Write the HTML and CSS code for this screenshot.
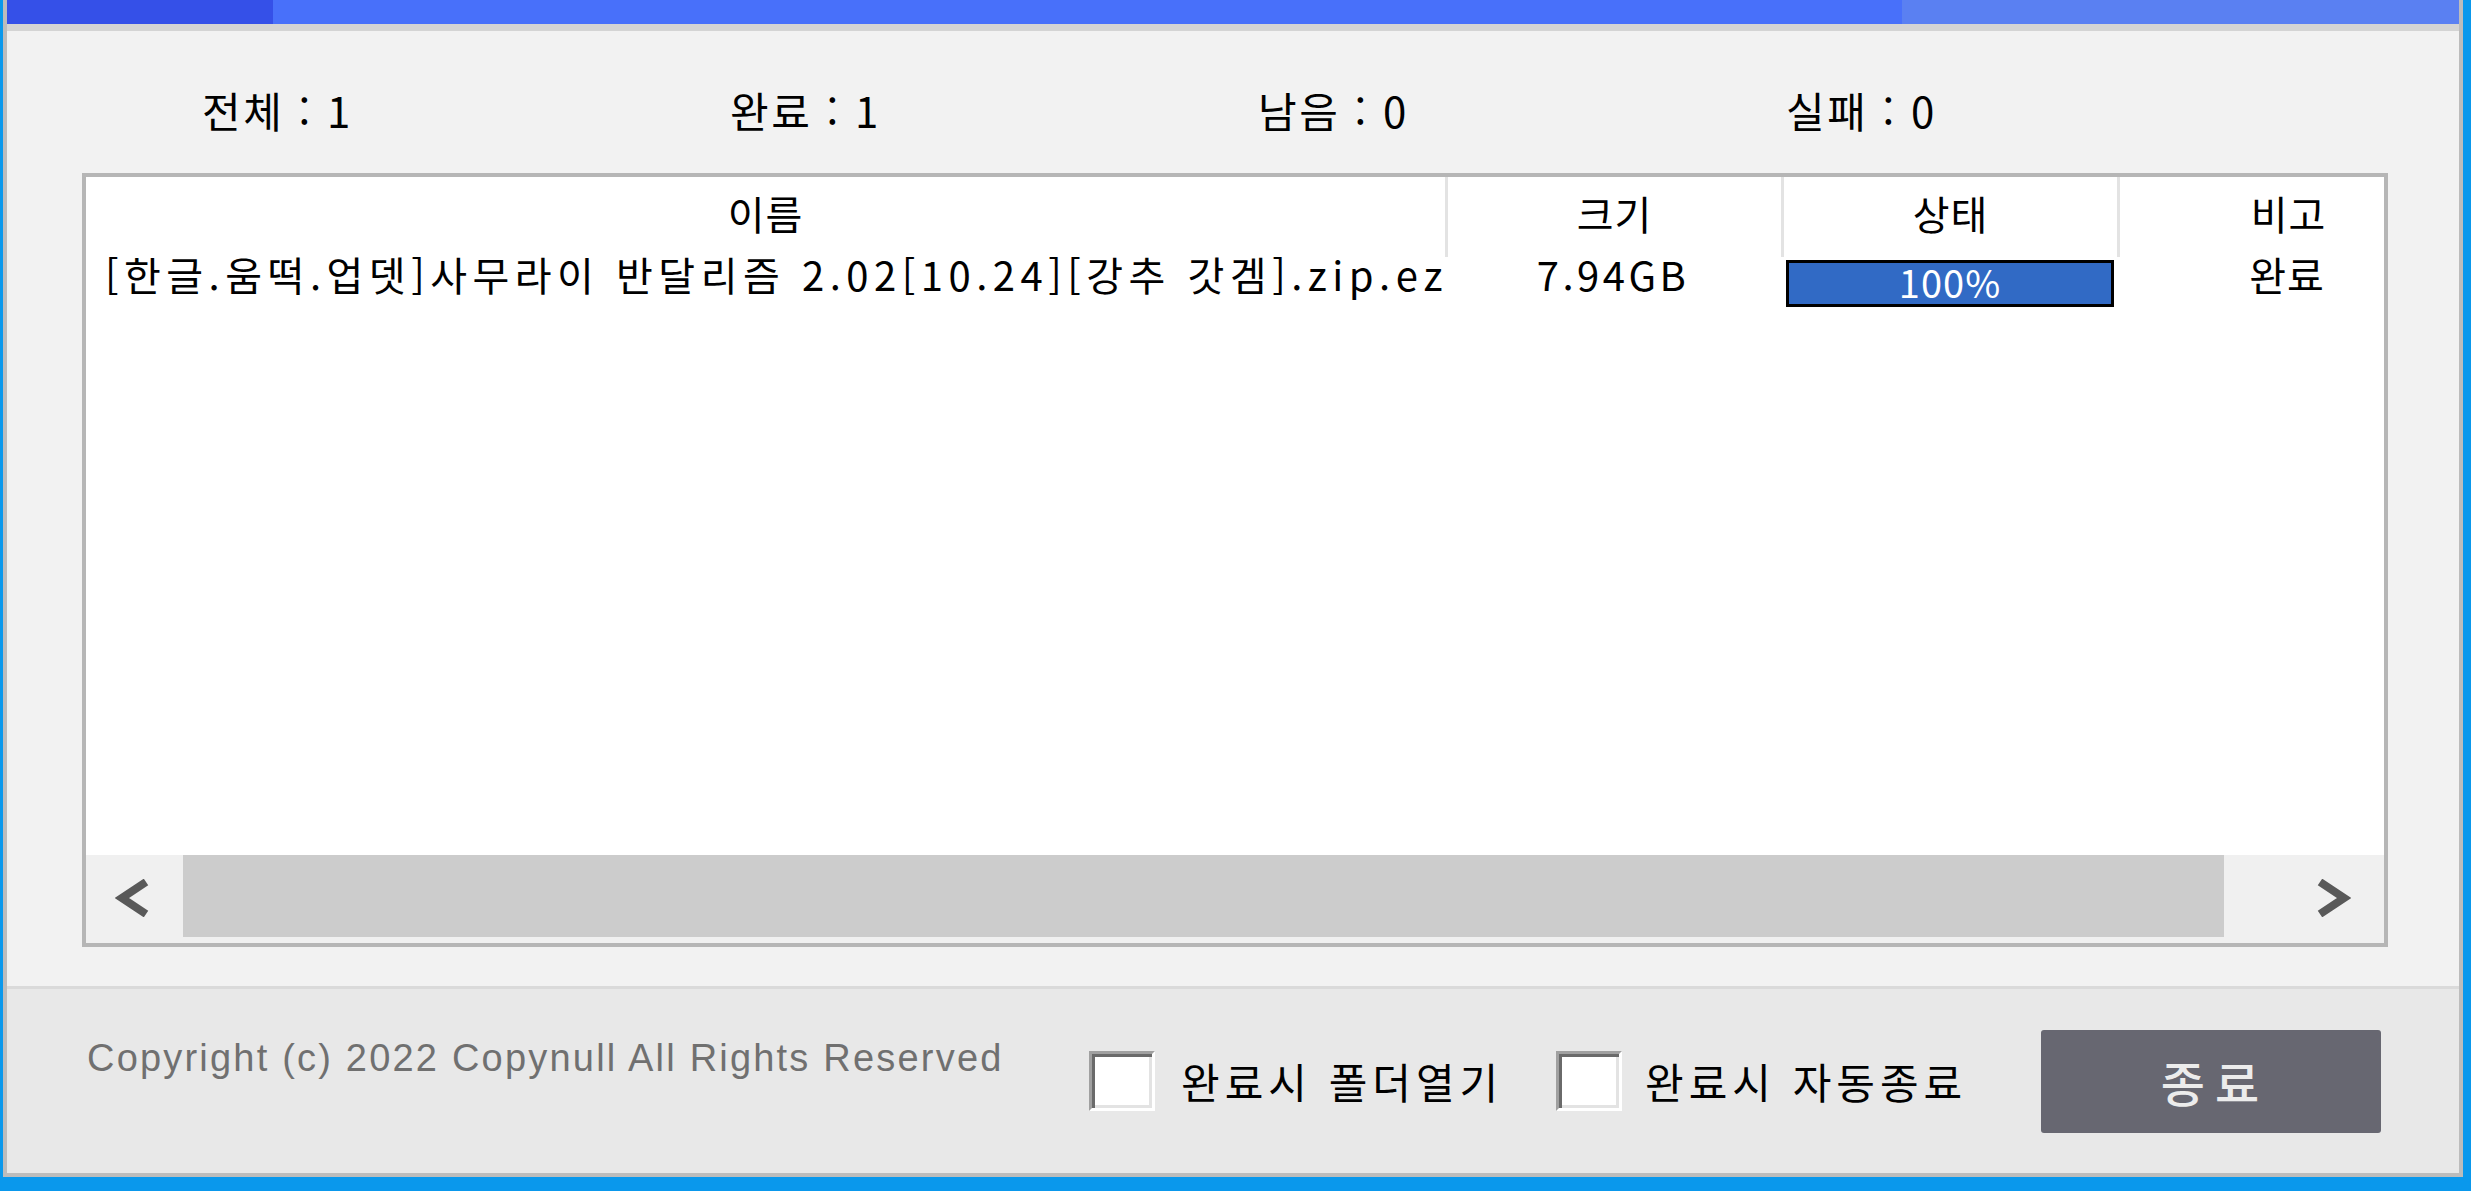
FILE: index.html
```html
<!DOCTYPE html>
<html lang="ko">
<head>
<meta charset="UTF-8">
<title>다운로드</title>
<link rel="stylesheet" href="styles.css">
</head>
<body>

<div class="window">
  <div class="titlebar">
    <div class="seg seg-dark"></div>
    <div class="seg seg-mid"></div>
    <div class="seg seg-light"></div>
  </div>
  <div class="title-shadow"></div>

  <div class="stats">
    <div class="stat">전체 : 1</div>
    <div class="stat">완료 : 1</div>
    <div class="stat">남음 : 0</div>
    <div class="stat">실패 : 0</div>
  </div>

  <div class="list">
    <div class="list-head">
      <div class="col">이름</div>
      <div class="col col-sep">크기</div>
      <div class="col col-sep">상태</div>
      <div class="col col-sep">비고</div>
    </div>
    <div class="list-row">
      <div class="cell cell-name">[한글.움떡.업뎃]사무라이 반달리즘 2.02[10.24][강추 갓겜].zip.ez</div>
      <div class="cell cell-size">7.94GB</div>
      <div class="cell cell-state">
        <div class="progress">100%</div>
      </div>
      <div class="cell">완료</div>
    </div>
    <div class="list-fill"></div>
    <!-- horizontal scrollbar -->
    <div class="hscroll">
      <div class="arrow arrow-left">
        <svg width="34" height="38" viewBox="0 0 34 38"><polyline points="31,3 7,19 31,35" fill="none" stroke="#595959" stroke-width="8"/></svg>
      </div>
      <div class="thumb"></div>
      <div class="arrow arrow-right">
        <svg width="34" height="38" viewBox="0 0 34 38"><polyline points="3,3 27,19 3,35" fill="none" stroke="#595959" stroke-width="8"/></svg>
      </div>
    </div>
  </div>

  <div class="footer">
    <div class="copyright">Copyright (c) 2022 Copynull All Rights Reserved</div>
    <label class="option option-first"><span class="checkbox"></span><span class="option-text">완료시 폴더열기</span></label>
    <label class="option"><span class="checkbox"></span><span class="option-text option-text-b">완료시 자동종료</span></label>
    <button class="close-btn">종료</button>
  </div>
</div>

</body>
</html>
```

FILE: styles.css
```css
body {
  margin: 0;
  height: 1191px;
  overflow: hidden;
  background-color: #0a98ec;
  font-family: "Noto Sans CJK KR", "Noto Sans", sans-serif;
  color: #000;
}
.window {
  margin-left: 3px;
  width: 2460px;
  height: 1177px;
  box-sizing: border-box;
  border: 4px solid #bcbcbc;
  border-top: 0;
  background-color: #f2f2f2;
  display: flex;
  flex-direction: column;
}
/* title bar */
.titlebar {
  height: 24px;
  display: flex;
}
.seg-dark {
  width: 266px;
  background-color: #3550e8;
}
.seg-mid {
  width: 1629px;
  background-color: #4870fa;
}
.seg-light {
  flex: 1;
  background-color: #5a80f2;
}
.title-shadow {
  height: 7px;
  background-color: #d4d4d4;
}
/* counters */
.stats {
  height: 142px;
  box-sizing: border-box;
  padding-top: 15px;
  display: flex;
  align-items: center;
  padding-left: 195px;
}
.stat {
  width: 528px;
  font-size: 42px;
  line-height: 1;
  letter-spacing: 2.5px;
  white-space: pre;
}
/* file list */
.list {
  margin-left: 75px;
  width: 2306px;
  height: 774px;
  box-sizing: border-box;
  border: 4px solid #b6b6b6;
  background-color: #fff;
  display: flex;
  flex-direction: column;
  overflow: hidden;
}
.list-head,
.list-row {
  display: grid;
  grid-template-columns: 1359px 336px 336px 340px;
}
.list-head {
  height: 80px;
}
.col {
  display: flex;
  align-items: center;
  justify-content: center;
  font-size: 40px;
  line-height: 1;
  letter-spacing: 1px;
  padding-bottom: 8px;
}
.col-sep {
  border-left: 3px solid #e3e3e3;
}
.list-row {
  height: 54px;
}
.cell {
  display: flex;
  justify-content: center;
  font-size: 40px;
  line-height: 34px;
  letter-spacing: 1px;
  white-space: nowrap;
}
.cell-name {
  justify-content: flex-start;
  padding-left: 19px;
  letter-spacing: 5.5px;
}
.cell-size {
  letter-spacing: 3.5px;
}
.cell-state {
  justify-content: flex-start;
}
.progress {
  margin-left: 5px;
  margin-top: 3px;
  width: 328px;
  height: 47px;
  box-sizing: border-box;
  border: 3px solid #000;
  background-color: #316ac5;
  color: #fff;
  font-size: 38px;
  line-height: 38px;
  letter-spacing: 1px;
  text-align: center;
}
.list-fill {
  flex: 1;
}
.hscroll {
  height: 88px;
  flex-shrink: 0;
  display: flex;
  background-color: #f0f0f0;
}
.arrow {
  display: flex;
  align-items: flex-start;
}
.arrow svg {
  margin-top: 24px;
}
.arrow-left {
  width: 97px;
  padding-left: 29px;
  box-sizing: border-box;
}
.arrow-right {
  width: 160px;
  padding-left: 93px;
  box-sizing: border-box;
}
.thumb {
  width: 2041px;
  height: 82px;
  background-color: #cccccc;
}
/* bottom bar */
.footer {
  margin-top: 39px;
  flex: 1;
  border-top: 3px solid #dadada;
  background-color: #e8e8e8;
  display: flex;
  align-items: center;
  padding-left: 80px;
  padding-right: 78px;
}
.copyright {
  align-self: flex-start;
  margin-top: 50px;
  width: 1002px;
  flex-shrink: 0;
  font-family: "Liberation Sans", Arial, sans-serif;
  font-size: 38px;
  line-height: 38px;
  letter-spacing: 2.2px;
  color: #707070;
  white-space: nowrap;
}
.option {
  display: flex;
  align-items: center;
}
.option-first {
  width: 467px;
}
.checkbox {
  width: 66px;
  height: 60px;
  box-sizing: border-box;
  border: 3px solid;
  border-color: #a0a0a0 #ffffff #ffffff #a0a0a0;
  background-color: #fff;
  box-shadow: inset 3px 3px 0 #6a6a6a, inset -3px -3px 0 #e3e3e3;
}
.option-text {
  margin-left: 26px;
  font-size: 42px;
  line-height: 1;
  letter-spacing: 5px;
  white-space: nowrap;
}
.option-text-b {
  margin-left: 23px;
}
.close-btn {
  margin-left: auto;
  width: 340px;
  height: 103px;
  border: none;
  border-radius: 3px;
  background-color: #676771;
  color: #ececec;
  font-family: "Noto Sans CJK KR", sans-serif;
  font-size: 48px;
  font-weight: 500;
  letter-spacing: 10px;
  padding-left: 14px;
  cursor: pointer;
}
```
